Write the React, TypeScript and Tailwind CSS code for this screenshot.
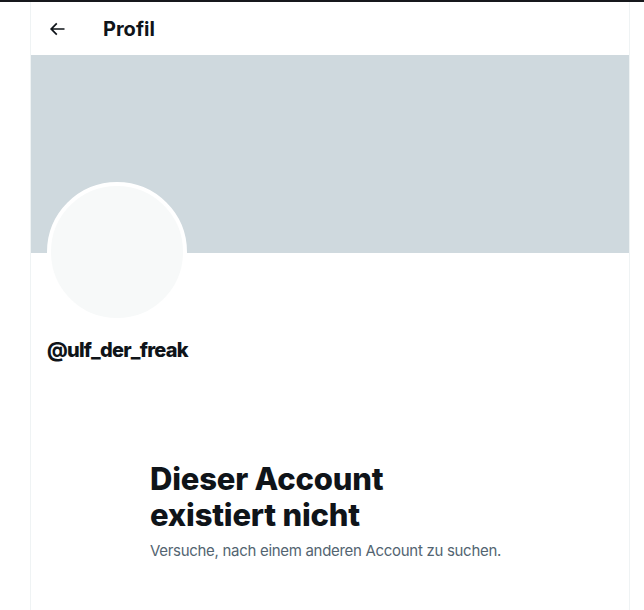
export default function App() {
  return (
    <div
      className="min-h-[610px] bg-white text-[#0f1419]"
      style={{ fontFamily: 'Inter, "Noto Sans", sans-serif' }}
    >
      <div className="h-[2px] w-full bg-[#16181c]" />
      <div className="ml-[30px] w-[600px] min-h-[608px] border-x border-[#eff3f4]">
        {/* header */}
        <div className="flex h-[53px] items-center pl-4">
          <svg viewBox="0 0 24 24" className="h-5 w-5 fill-[#0f1419]">
            <path d="M7.414 13l5.043 5.04-1.414 1.42L3.586 12l7.457-7.46 1.414 1.42L7.414 11H21v2H7.414z" />
          </svg>
          <h1 className="ml-[36px] text-[20px] font-bold leading-6">Profil</h1>
        </div>

        {/* banner */}
        <div className="h-[198px] bg-[#cfd9de]" />

        {/* avatar + handle */}
        <div className="px-4">
          <div className="-mt-[71px] h-[140px] w-[140px] rounded-full border-4 border-white bg-[#f7f9f9]" />
          <div className="mt-4 text-[20px] font-extrabold leading-6 tracking-[-0.75px]">@ulf_der_freak</div>
        </div>

        {/* empty state */}
        <div className="mt-[99px] pl-[119px]">
          <h2 className="text-[31px] font-extrabold leading-9 tracking-[-0.2px]">
            Dieser Account
            <br />
            existiert nicht
          </h2>
          <p className="mt-2 text-[15px] leading-5 tracking-[-0.3px] text-[#536471]">
            Versuche, nach einem anderen Account zu suchen.
          </p>
        </div>
      </div>
    </div>
  );
}
